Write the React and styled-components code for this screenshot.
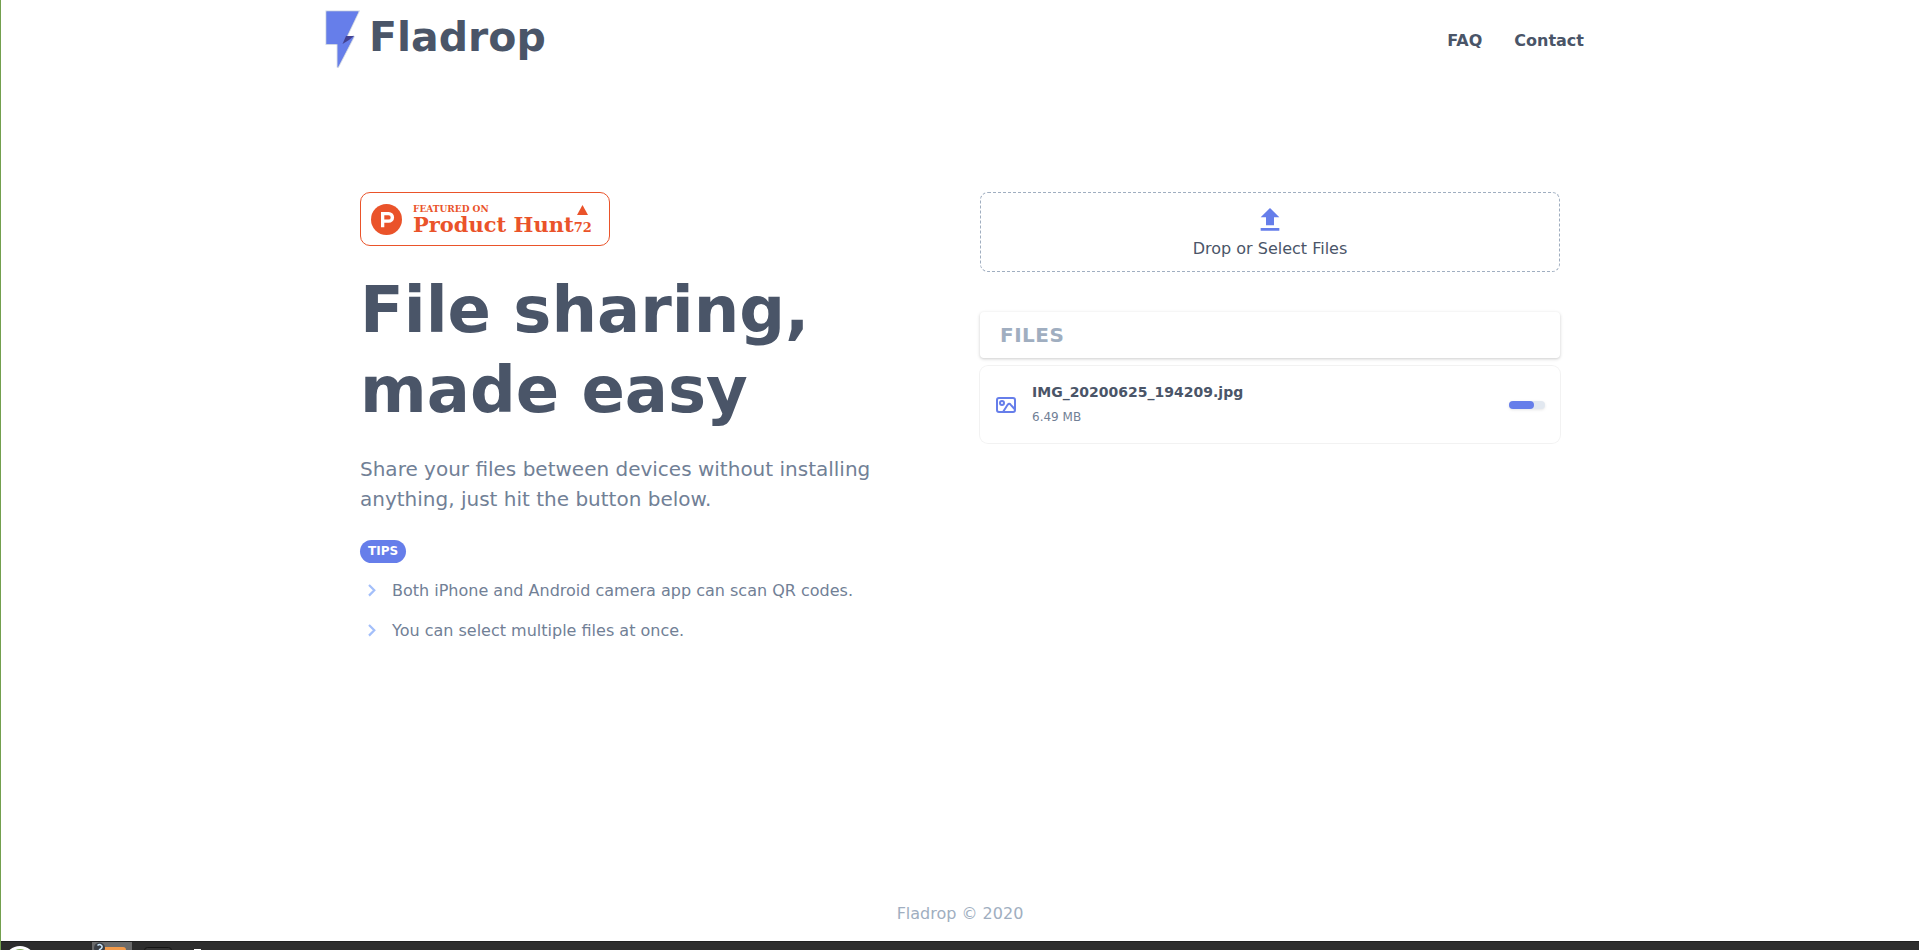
import React from "react";
import styled, { createGlobalStyle } from "styled-components";

const GlobalStyle = createGlobalStyle`
  *, *::before, *::after {
    box-sizing: border-box;
  }
  body {
    margin: 0;
    background: #fff;
    color: #4a5568;
    font-family: "DejaVu Sans", sans-serif;
    font-size: 16px;
    line-height: 24px;
  }
  h1, h2, p, ul {
    margin: 0;
    padding: 0;
  }
  a {
    color: inherit;
    text-decoration: none;
  }
`;

const Screen = styled.div`
  min-height: 100vh;
  display: flex;
  flex-direction: column;
  border-left: 1px solid #73a04e;
`;

const Header = styled.header`
  width: 100%;
  max-width: 1280px;
  height: 80px;
  margin: 0 auto;
  padding-right: 16px;
  display: flex;
  align-items: flex-start;
  justify-content: space-between;
`;

const Brand = styled.a`
  display: flex;
  gap: 1px;
  font-size: 41px;
  font-weight: 700;
  line-height: 74px;
`;

const Nav = styled.nav`
  display: flex;
  gap: 32px;
  padding-top: 29px;
  font-weight: 700;
`;

const Main = styled.main`
  width: 100%;
  max-width: 1280px;
  margin: 0 auto;
  padding: 112px 40px 40px;
  flex: 1;
  display: grid;
  grid-template-columns: 1fr 1fr;
  align-items: start;
  gap: 40px;
`;

const Intro = styled.section`
  display: flex;
  flex-direction: column;
  align-items: flex-start;
`;

const HuntBadge = styled.a`
  width: 250px;
  height: 54px;
  padding: 0 10px;
  display: flex;
  align-items: center;
  border: 1px solid #ea532a;
  border-radius: 10px;
  color: #ea532a;
  font-family: "DejaVu Serif", serif;
  font-weight: 700;
  white-space: nowrap;
`;

const HuntText = styled.span`
  margin-left: 11px;
  padding-top: 2px;
  display: flex;
  flex-direction: column;
  small {
    font-size: 9px;
    line-height: 10px;
  }
  strong {
    font-size: 21px;
    line-height: 22px;
  }
`;

const HuntVotes = styled.span`
  padding-top: 2px;
  display: flex;
  flex-direction: column;
  align-items: center;
  gap: 5px;
  font-size: 13px;
  line-height: 16px;
`;

const Title = styled.h1`
  margin-top: 24px;
  font-size: 64px;
  font-weight: 700;
  line-height: 80px;
`;

const Lead = styled.p`
  margin-top: 24px;
  color: #718096;
  font-size: 20px;
  line-height: 30px;
`;

const Tag = styled.h2`
  margin-top: 26px;
  padding: 4px 8px;
  border-radius: 12px;
  background: #667eea;
  color: #fff;
  font-size: 12px;
  font-weight: 700;
  line-height: 15px;
`;

const Tips = styled.ul`
  margin-top: 16px;
  display: grid;
  gap: 16px;
  list-style: none;
  color: #718096;
`;

const Tip = styled.li`
  display: flex;
  gap: 8px;
  svg {
    color: #a3bffa;
  }
`;

const DropZone = styled.button`
  width: 100%;
  padding: 11px 11px 10px;
  display: flex;
  flex-direction: column;
  align-items: center;
  gap: 1px;
  border: 1px dashed #a0aec0;
  border-radius: 8px;
  background: #fff;
  color: #4a5568;
  font: inherit;
  cursor: pointer;
  svg {
    color: #667eea;
  }
`;

const FilesTitle = styled.h2`
  margin-top: 40px;
  padding: 8px 20px;
  border-radius: 4px;
  box-shadow: 0 1px 3px 1px rgba(0, 0, 0, 0.1), 0 1px 2px 0 rgba(0, 0, 0, 0.06);
  color: #a0aec0;
  font-size: 20px;
  font-weight: 700;
  letter-spacing: 0.025em;
  line-height: 30px;
`;

const FileRow = styled.div`
  margin-top: 8px;
  padding: 14px 15px 13px 14px;
  display: flex;
  align-items: center;
  border-radius: 8px;
  box-shadow: 0 0 0 1px rgba(0, 0, 0, 0.05);
  > svg {
    color: #667eea;
  }
`;

const FileInfo = styled.div`
  margin-left: 14px;
  flex: 1;
`;

const FileName = styled.p`
  font-size: 14px;
  font-weight: 700;
  line-height: 24px;
`;

const FileSize = styled.p`
  color: #718096;
  font-size: 12px;
  line-height: 26px;
`;

const Progress = styled.div`
  width: 36px;
  height: 8px;
  border-radius: 4px;
  background: #e2e8f0;
  box-shadow: 0 1px 3px 0 rgba(0, 0, 0, 0.1);
`;

const ProgressFill = styled.div`
  height: 8px;
  border-radius: 4px;
  background: #667eea;
`;

const Footer = styled.footer`
  padding-bottom: 15px;
  color: #a0aec0;
  text-align: center;
`;

const Taskbar = styled.div`
  height: 9px;
  padding-left: 7px;
  display: flex;
  overflow: hidden;
  background: #2d2d2d;
  border-top: 1px solid #202020;
`;

const tips = [
  "Both iPhone and Android camera app can scan QR codes.",
  "You can select multiple files at once."
];

const files = [
  { name: "IMG_20200625_194209.jpg", size: "6.49 MB", progress: 70 }
];

const Bolt = () => (
  <svg width="48" height="76" viewBox="0 0 48 76" aria-hidden="true">
    <g stroke="#94a3c4" strokeOpacity="0.45" strokeWidth="2">
      <path d="M6.5 11.5H38.5L23 44H6.5Z" fill="#667eea" />
      <path d="M17.7 44H23L34 36 17.7 67.5Z" fill="#667eea" />
    </g>
    <path d="M6.5 11.5H38.5L23 44H6.5Z" fill="#667eea" />
    <path d="M17.7 44V67.5L34 36 23 43Z" fill="#667eea" />
    <path d="M26 36H34L29 40 22.5 44Z" fill="#434190" />
  </svg>
);

const Upload = () => (
  <svg width="32" height="32" viewBox="0 0 24 24" fill="currentColor" aria-hidden="true">
    <path d="M9 16h6v-6h4l-7-7-7 7h4zm-4 2h14v2H5z" />
  </svg>
);

const Chevron = () => (
  <svg width="24" height="24" viewBox="0 0 24 24" fill="none" stroke="currentColor" strokeWidth="2.2" aria-hidden="true">
    <path d="M9 6l5.300 5.300L9 16.600" />
  </svg>
);

const Picture = () => (
  <svg width="24" height="24" viewBox="0 0 24 24" fill="none" stroke="currentColor" strokeWidth="2" aria-hidden="true">
    <rect x="3" y="5" width="18" height="14" rx="2" />
    <circle cx="8" cy="10" r="2" />
    <path d="M9 19l4.600-7.200q1.600-2 3.200 0L21 16.500" />
  </svg>
);

export default () => {
  return (
    <>
      <GlobalStyle />
      <Screen>
        <Header>
          <Brand href="#">
            <Bolt />
            Fladrop
          </Brand>
          <Nav>
            <a href="#faq">FAQ</a>
            <a href="#contact">Contact</a>
          </Nav>
        </Header>
        <Main>
          <Intro>
            <HuntBadge href="#producthunt">
              <svg width="31" height="31" viewBox="0 0 31 31" aria-hidden="true">
                <circle cx="15.5" cy="15.5" r="15.5" fill="#ea532a" />
                <path
                  d="M10 8H17.7A5.4 5.4 0 0 1 17.7 18.8H13.3V23.3H10ZM13.3 11.2V15.6H17.5A2.2 2.2 0 0 0 17.5 11.2Z"
                  fill="#fff"
                  fillRule="evenodd"
                />
              </svg>
              <HuntText>
                <small>FEATURED ON</small>
                <strong>Product Hunt</strong>
              </HuntText>
              <HuntVotes>
                <svg width="11" height="10" viewBox="0 0 11 10" aria-hidden="true">
                  <path d="M5.5 0L11 10H0Z" fill="#ea532a" />
                </svg>
                72
              </HuntVotes>
            </HuntBadge>
            <Title>
              File sharing,
              <br />
              made easy
            </Title>
            <Lead>
              Share your files between devices without installing anything, just
              hit the button below.
            </Lead>
            <Tag>TIPS</Tag>
            <Tips>
              {tips.map((tip) => (
                <Tip key={tip}>
                  <Chevron />
                  {tip}
                </Tip>
              ))}
            </Tips>
          </Intro>
          <section>
            <DropZone type="button">
              <Upload />
              Drop or Select Files
            </DropZone>
            <FilesTitle>FILES</FilesTitle>
            {files.map((file) => (
              <FileRow key={file.name}>
                <Picture />
                <FileInfo>
                  <FileName>{file.name}</FileName>
                  <FileSize>{file.size}</FileSize>
                </FileInfo>
                <Progress
                  role="progressbar"
                  aria-label={file.name}
                  aria-valuenow={file.progress}
                >
                  <ProgressFill style={{ width: `${file.progress}%` }} />
                </Progress>
              </FileRow>
            ))}
          </section>
        </Main>
        <Footer>Fladrop © 2020</Footer>
        <Taskbar>
          <svg width="200" height="8" viewBox="8 0 200 8" aria-hidden="true">
            <ellipse cx="20" cy="16" rx="14" ry="12" fill="#fff" />
            <ellipse cx="20" cy="15" rx="9" ry="8" fill="#86b35a" />
            <path d="M92 0H132V8H92Z" fill="#6b6b6b" />
            <path d="M103 8V5H123Q126 5 126 8Z" fill="#f29a4a" />
            <circle cx="99.500" cy="6" r="5.500" fill="#3b3f45" />
            <path d="M97.500 3.500Q99.500 1.500 101.500 3.500T99 8" fill="none" stroke="#c9e2f5" strokeWidth="1.500" />
            <rect x="144.500" y="5.500" width="27" height="12" rx="3" fill="#333" stroke="#141414" />
            <path d="M194 8V7H201V8Z" fill="#fff" />
          </svg>
        </Taskbar>
      </Screen>
    </>
  );
};
